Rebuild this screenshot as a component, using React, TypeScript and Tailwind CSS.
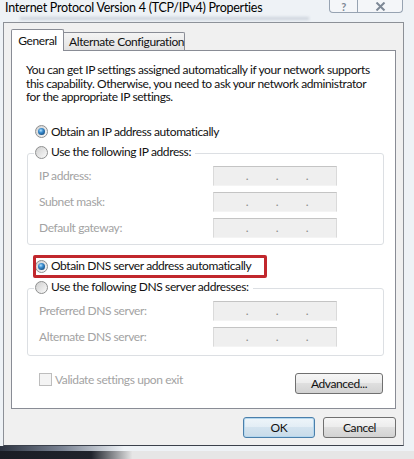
import React from "react";

function Radio({ checked }: { checked?: boolean }) {
  return (
    <span className="w-[13px] h-[13px] rounded-full border border-[#8e8f8f] bg-[linear-gradient(135deg,#cfcfcf,#fafafa)] flex items-center justify-center shrink-0">
      {checked && (
        <span className="w-[7px] h-[7px] rounded-full bg-[radial-gradient(circle_at_40%_35%,#b6e3ff_0%,#3b8dcf_35%,#0f3f6e_90%)]" />
      )}
    </span>
  );
}

function IpBox() {
  return (
    <div className="w-[124px] h-[20px] border border-[#dadada] border-t-[#c4c4c4] border-b-[#f4f4f4] bg-[#efefef] flex pl-[18px] text-[#8a8a8a] leading-[18px]">
      <span className="w-[30px] text-center">.</span>
      <span className="w-[30px] text-center">.</span>
      <span className="w-[30px] text-center">.</span>
    </div>
  );
}

function FieldRow({ label }: { label: string }) {
  return (
    <div className="mt-[6px] h-[20px] flex items-center pl-[11px]">
      <span className="w-[174px] text-[#a3a3a3]">{label}</span>
      <IpBox />
    </div>
  );
}

export default function App() {
  return (
    <div className="w-[414px] h-[459px] overflow-hidden bg-[#eef2f6] flex flex-col font-['Lato',sans-serif] text-[12px] tracking-[-0.4px] text-[#111]">
      {/* title bar */}
      <div className="h-[22px] flex items-start shrink-0">
        <div className="flex-1 flex flex-col">
          <div className="pl-[5px] h-[17px] text-[12.5px] leading-[16px] tracking-[-0.25px] text-black whitespace-nowrap">
            Internet Protocol Version 4 (TCP/IPv4) Properties
          </div>
          <div className="mx-[20px] h-[3px] bg-[#c3cad5] blur-[1.5px] opacity-80" />
        </div>
        <div className="mr-[11px] w-[74px] h-[13px] flex border border-t-0 border-[#97a3b2] rounded-b-[4px] bg-[#f4f6f9] overflow-hidden">
          <div className="w-[28px] border-r border-[#97a3b2] flex justify-center items-center">
            <span className="text-[11px] leading-[11px] font-bold text-[#7d8896]">?</span>
          </div>
          <div className="flex-1 flex justify-center items-center">
            <svg width="11" height="9" viewBox="0 0 11 9">
              <path d="M1.5 0.5 L9.5 8.5 M9.5 0.5 L1.5 8.5" stroke="#7d8896" strokeWidth="2" fill="none" />
            </svg>
          </div>
        </div>
      </div>

      {/* client area */}
      <div className="ml-[3px] w-[401px] h-[424px] shrink-0 border border-[#8c9097] border-b-[#3b414c] bg-[#f0f0f0] flex flex-col">
        {/* tabs */}
        <div className="ml-[7px] mt-[6px] h-[21px] flex items-end">
          <div className="w-[53px] h-[22px] -mb-[1px] relative z-10 border border-b-0 border-[#898c95] bg-white rounded-t-[2px] flex items-center justify-center">
            General
          </div>
          <div className="w-[121px] h-[18px] border border-l-0 border-b-0 border-[#898c95] bg-[linear-gradient(to_bottom,#f4f4f4,#e2e2e2)] rounded-tr-[2px] flex items-center pl-[5px] whitespace-nowrap">
            Alternate Configuration
          </div>
        </div>

        {/* panel */}
        <div className="ml-[7px] w-[385px] h-[359px] border border-[#898c95] bg-white flex flex-col">
          <p className="ml-[14px] mt-[12px] leading-[13.5px] whitespace-nowrap">
            You can get IP settings assigned automatically if your network supports
            <br />
            this capability. Otherwise, you need to ask your network administrator
            <br />
            for the appropriate IP settings.
          </p>

          <div className="ml-[23px] mt-[20px] h-[16px] flex items-center gap-[3px]">
            <Radio checked />
            <span>Obtain an IP address automatically</span>
          </div>

          <div className="ml-[15px] w-[357px] mt-[13.5px] border border-[#dcdfe3] rounded-[3px] flex flex-col pb-[6px]">
            <div className="-mt-[10px] ml-[6px] self-start bg-white pl-[1px] pr-[4px] h-[16px] flex items-center gap-[3px]">
              <Radio />
              <span>Use the following IP address:</span>
            </div>
            <FieldRow label="IP address:" />
            <FieldRow label="Subnet mask:" />
            <FieldRow label="Default gateway:" />
          </div>

          <div className="ml-[23px] mt-[13px] h-[16px] relative flex items-center gap-[3px] self-start">
            <Radio checked />
            <span>Obtain DNS server address automatically</span>
            <div className="absolute -left-[2px] -top-[3px] w-[234px] h-[23px] border-[3px] border-[#c1272d] rounded-[2px] pointer-events-none" />
          </div>

          <div className="ml-[15px] w-[357px] mt-[14px] border border-[#dcdfe3] rounded-[3px] flex flex-col pb-[8px]">
            <div className="-mt-[10px] ml-[6px] self-start bg-white pl-[1px] pr-[4px] h-[16px] flex items-center gap-[3px]">
              <Radio />
              <span>Use the following DNS server addresses:</span>
            </div>
            <FieldRow label="Preferred DNS server:" />
            <FieldRow label="Alternate DNS server:" />
          </div>

          <div className="mt-[17px] flex justify-between items-start pl-[27px] pr-[12px]">
            <div className="h-[13px] flex items-center gap-[3px]">
              <span className="w-[13px] h-[13px] border border-[#bdbdbd] bg-[#f4f4f4] shrink-0" />
              <span className="text-[#a3a3a3]">Validate settings upon exit</span>
            </div>
            <button className="w-[88px] h-[21px] rounded-[3px] border border-[#707070] bg-[linear-gradient(to_bottom,#f6f6f6_0%,#ececec_50%,#dfdfdf_50%,#d2d2d2_100%)] flex items-center justify-center text-[#111]">
              Advanced...
            </button>
          </div>
        </div>

        {/* dialog buttons */}
        <div className="mt-[8px] flex justify-end gap-[8px] pr-[7px]">
          <button className="w-[72px] h-[21px] rounded-[3px] border border-[#4a7fab] bg-[linear-gradient(to_bottom,#eef5fa_0%,#e2edf5_50%,#d3e3ef_50%,#c8dbe9_100%)] shadow-[inset_0_0_0_1px_#b5d7ee] flex items-center justify-center text-[#111]">
            OK
          </button>
          <button className="w-[73px] h-[21px] rounded-[3px] border border-[#707070] bg-[linear-gradient(to_bottom,#f6f6f6_0%,#ececec_50%,#dfdfdf_50%,#d2d2d2_100%)] flex items-center justify-center text-[#111]">
            Cancel
          </button>
        </div>
      </div>

      <div className="h-[5px] shrink-0 bg-[linear-gradient(to_right,#2c3340_0%,#7a8393_15%,#eef2f6_30%)]" />
      <div className="h-[8px] shrink-0 bg-[linear-gradient(to_right,#1a1d25_0%,#1f232c_22%,#e6e6e6_32%,#e6e6e6_100%)]" />
    </div>
  );
}
